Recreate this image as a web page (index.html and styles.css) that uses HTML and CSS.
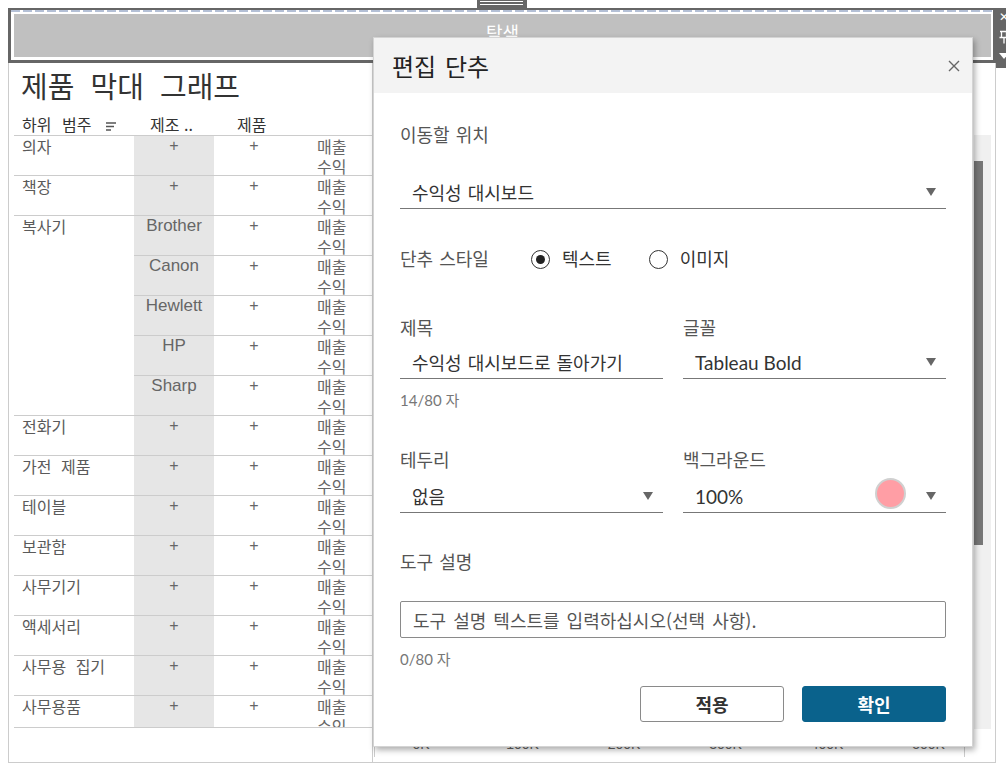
FILE: index.html
```html
<!DOCTYPE html>
<html lang="ko">
<head>
<meta charset="utf-8">
<title>편집 단추</title>
<link rel="stylesheet" href="styles.css">
</head>
<body>
<div class="page">
  <div class="grip"><span></span><span></span></div>
  <div class="frame">
    <div class="frame-inner">
      <div class="nav-btn">탐색</div>
    </div>
  </div>
  <div class="toolbar">
    <span class="tb-x">✕</span>
    <svg class="tb-pin" width="10" height="14" viewBox="0 0 10 14"><path d="M1 1.5H9M2.5 1.5V7M7.5 1.5V7M0.5 7.5H9.5M5 7.5V13.5" fill="none" stroke="#fff" stroke-width="1.3"/></svg>
    <svg class="tb-arrow" width="10" height="7" viewBox="0 0 10 7"><path d="M0 0H10L5 6z" fill="#fff"/></svg>
  </div>

  <div class="sheets">
    <div class="sheet-left">
      <h1 class="title">제품 막대 그래프</h1>
      <div class="thead">
        <div class="h1c">하위 범주<svg class="sort" width="11" height="9" viewBox="0 0 11 9"><path d="M0 1H10M0 4.5H8M0 8H5" stroke="#555" stroke-width="1.6"/></svg></div>
        <div class="h2c">제조 ..</div>
        <div class="h3c">제품</div>
        <div></div>
      </div>
      <div class="tbody">
        <div class="grid">
          <div class="c c1">의자</div><div class="c c2 lat">+</div><div class="c c3 lat">+</div><div class="c c4">매출<br>수익</div>
          <div class="c c1">책장</div><div class="c c2 lat">+</div><div class="c c3 lat">+</div><div class="c c4">매출<br>수익</div>
          <div class="c c1 span5">복사기</div><div class="c c2 lat name">Brother</div><div class="c c3 lat">+</div><div class="c c4">매출<br>수익</div>
          <div class="c c2 lat name">Canon</div><div class="c c3 lat">+</div><div class="c c4">매출<br>수익</div>
          <div class="c c2 lat name">Hewlett</div><div class="c c3 lat">+</div><div class="c c4">매출<br>수익</div>
          <div class="c c2 lat name">HP</div><div class="c c3 lat">+</div><div class="c c4">매출<br>수익</div>
          <div class="c c2 lat name">Sharp</div><div class="c c3 lat">+</div><div class="c c4">매출<br>수익</div>
          <div class="c c1">전화기</div><div class="c c2 lat">+</div><div class="c c3 lat">+</div><div class="c c4">매출<br>수익</div>
          <div class="c c1">가전 제품</div><div class="c c2 lat">+</div><div class="c c3 lat">+</div><div class="c c4">매출<br>수익</div>
          <div class="c c1">테이블</div><div class="c c2 lat">+</div><div class="c c3 lat">+</div><div class="c c4">매출<br>수익</div>
          <div class="c c1">보관함</div><div class="c c2 lat">+</div><div class="c c3 lat">+</div><div class="c c4">매출<br>수익</div>
          <div class="c c1">사무기기</div><div class="c c2 lat">+</div><div class="c c3 lat">+</div><div class="c c4">매출<br>수익</div>
          <div class="c c1">액세서리</div><div class="c c2 lat">+</div><div class="c c3 lat">+</div><div class="c c4">매출<br>수익</div>
          <div class="c c1">사무용 집기</div><div class="c c2 lat">+</div><div class="c c3 lat">+</div><div class="c c4">매출<br>수익</div>
          <div class="c c1">사무용품</div><div class="c c2 lat">+</div><div class="c c3 lat">+</div><div class="c c4">매출<br>수익</div>
        </div>
      </div>
    </div>
    <div class="sheet-right">
      <div class="chart-area">
        <div class="track"><div class="thumb"></div></div>
      </div>
      <div class="axis">
        <span>0K</span><span>100K</span><span>200K</span><span>300K</span><span>400K</span><span>500K</span>
      </div>
    </div>
  </div>

  <div class="dialog">
    <div class="dlg-head">
      <div class="dlg-title">편집 단추</div>
      <svg class="dlg-close" width="12" height="12" viewBox="0 0 12 12"><path d="M1 1L11 11M11 1L1 11" stroke="#666" stroke-width="1.4"/></svg>
    </div>
    <div class="dlg-body">
      <div class="label l-first">이동할 위치</div>
      <div class="field f-first">
        <span class="val">수익성 대시보드</span>
        <svg class="arrow" width="10" height="8" viewBox="0 0 10 8"><path d="M0 0H10L5 8z" fill="#666"/></svg>
      </div>

      <div class="radio-row">
        <div class="label r-label">단추 스타일</div>
        <div class="radio-opt"><span class="radio on"></span><span>텍스트</span></div>
        <div class="radio-opt"><span class="radio"></span><span>이미지</span></div>
      </div>

      <div class="row2 r-title">
        <div class="col">
          <div class="label">제목</div>
          <div class="field f-sub"><span class="val">수익성 대시보드로 돌아가기</span></div>
        </div>
        <div class="col">
          <div class="label">글꼴</div>
          <div class="field f-sub">
            <span class="val lato">Tableau Bold</span>
            <svg class="arrow" width="10" height="8" viewBox="0 0 10 8"><path d="M0 0H10L5 8z" fill="#666"/></svg>
          </div>
        </div>
      </div>
      <div class="hint">14/80 자</div>

      <div class="row2 r-border">
        <div class="col">
          <div class="label">테두리</div>
          <div class="field f-sub">
            <span class="val">없음</span>
            <svg class="arrow" width="10" height="8" viewBox="0 0 10 8"><path d="M0 0H10L5 8z" fill="#666"/></svg>
          </div>
        </div>
        <div class="col">
          <div class="label">백그라운드</div>
          <div class="field f-sub">
            <span class="val lato">100%</span>
            <span class="swatch"></span>
            <svg class="arrow" width="10" height="8" viewBox="0 0 10 8"><path d="M0 0H10L5 8z" fill="#666"/></svg>
          </div>
        </div>
      </div>

      <div class="label l-tip">도구 설명</div>
      <div class="textbox">도구 설명 텍스트를 입력하십시오(선택 사항).</div>
      <div class="hint">0/80 자</div>

      <div class="buttons">
        <button class="btn btn-apply">적용</button>
        <button class="btn btn-ok">확인</button>
      </div>
    </div>
  </div>
</div>
</body>
</html>
```

FILE: styles.css
```css
* { box-sizing: border-box; margin: 0; padding: 0; }
html, body { width: 1006px; height: 766px; overflow: hidden; background: #fff; }
body { font-family: "Noto Sans CJK KR", "Liberation Sans", sans-serif; color: #555; }

.page { position: relative; width: 1006px; height: 766px; padding-top: 8px; }

/* drag grip over the top frame */
.grip { position: absolute; left: 477px; top: 0; width: 50px; height: 8px; background: #666; z-index: 5;
  padding: 1px 4px 0 3px; display: flex; flex-direction: column; gap: 2px; }
.grip span { display: block; height: 1px; background: #fff; }

/* navigation object frame */
.frame { margin-left: 8px; width: 988px; height: 55px; border-style: solid; border-color: #666;
  border-width: 2px 3px 3px 3px; }
.frame-inner { height: 100%; padding: 4px 2px 3px 3px;
  background: repeating-linear-gradient(90deg, #b4c0d6 0 9px, #fff 9px 12px) top left / 100% 2px no-repeat; }
.nav-btn { height: 43px; background: #c0c0c0; color: #fff; font-size: 18px; display: flex;
  align-items: center; justify-content: center; padding-bottom: 8px; }

.toolbar { position: absolute; left: 996px; top: 8px; width: 14px; height: 60px; background: #666; color: #fff;
  display: flex; flex-direction: column; align-items: flex-start; padding: 2px 0 0 3px; z-index: 5; }
.tb-x { font-family: "DejaVu Sans", sans-serif; font-size: 12px; line-height: 14px; }
.tb-pin { margin-top: 6px; }
.tb-arrow { margin-top: 9px; }

/* dashboard sheets */
.sheets { display: flex; margin-left: 8px; width: 988px; height: 700px; border: 1px solid #ccc; border-top: 0; }
.sheet-left { width: 364px; border-right: 1px solid #ccc; padding-left: 5px; display: flex; flex-direction: column; }
.title { margin: 5px 0 11px 7px; font-size: 29px; line-height: 34px; font-weight: 400; color: #333; word-spacing: 8px; }

.thead { display: grid; grid-template-columns: 120px 80px 80px 1fr; height: 23px; border-bottom: 1px solid #ccc;
  font-size: 16px; line-height: 20px; color: #333; align-items: start; padding-top: 1px; }
.h1c { padding-left: 8px; display: flex; align-items: center; word-spacing: 6px; }
.sort { margin-left: 15px; margin-top: 4px; }
.h2c { padding-left: 16px; }
.h3c { padding-left: 23px; }

.tbody { height: 592px; overflow: hidden; border-bottom: 1px solid #ccc; }
.grid { display: grid; grid-template-columns: 120px 80px 80px 1fr; grid-auto-rows: 40px; }
.c { border-bottom: 1px solid #ccc; font-size: 16px; line-height: 20px; color: #5a5a5a; }
.c1 { padding-left: 8px; word-spacing: 5px; }
.span5 { grid-row: span 5; }
.c2 { background: #e6e6e6; text-align: center; color: #666; }
.c3 { text-align: center; color: #666; }
.c4 { padding-left: 23px; color: #666; }
.lat { font-family: "Liberation Sans", sans-serif; }
.name { font-size: 17px; }

.sheet-right { flex: 1; display: flex; flex-direction: column; }
.chart-area { height: 667px; display: flex; justify-content: flex-end; padding: 72px 4px 0 0; }
.track { width: 17px; height: 594px; background: #f0f0f0; padding-top: 26px; }
.thumb { width: 9px; height: 384px; background: #777; }
.axis { margin-left: 1px; width: 591px; height: 27px; border-left: 1px solid #ccc; border-right: 1px solid #ccc;
  display: grid; grid-template-columns: repeat(6, 92px); column-gap: 9.5px; padding-top: 6px;
  font-family: "Liberation Sans", sans-serif; font-size: 14px; line-height: 16px; color: #666; text-align: center; }

/* dialog */
.dialog { position: absolute; left: 373px; top: 37px; width: 600px; height: 710px; background: #fff;
  border: 1px solid #d4d4d4; box-shadow: 2px 3px 6px rgba(0,0,0,0.32); z-index: 10;
  display: flex; flex-direction: column; }
.dlg-head { height: 55px; background: #f3f3f3; display: flex; align-items: center; justify-content: space-between;
  padding: 0 12px 0 18px; }
.dlg-title { font-size: 24px; color: #222; word-spacing: 2px; line-height: 30px; }
.dlg-body { padding: 0 26px; font-size: 18px; }

.label { font-size: 18px; line-height: 24px; color: #555; word-spacing: 1px; }
.l-first { margin-top: 29px; }
.field { height: 34px; border-bottom: 1px solid #777; display: flex; align-items: center; padding: 1px 10px 0 12px;
  color: #333; font-size: 18px; word-spacing: 1px; }
.field .val { flex: 1; white-space: nowrap; }
.f-first { margin-top: 29px; }
.f-sub { margin-top: 6px; }
.lato { font-family: "Lato", sans-serif; font-size: 19px; word-spacing: 0; }
.arrow { flex: none; }

.radio-row { display: flex; align-items: center; margin-top: 37px; height: 24px; color: #333; }
.r-label { width: 131px; }
.radio-opt { display: flex; align-items: center; gap: 12px; margin-right: 37px; line-height: 24px; }
.radio { width: 19px; height: 19px; border-radius: 50%; border: 1px solid #333; display: flex;
  align-items: center; justify-content: center; margin-top: 3px; }
.radio.on { border-width: 1.5px; }
.radio.on::after { content: ""; width: 9px; height: 9px; border-radius: 50%; background: #222; }

.row2 { display: grid; grid-template-columns: 263px 263px; column-gap: 20px; }
.r-title { margin-top: 45px; }
.r-border { margin-top: 38px; }
.r-border .f-sub { margin-top: 8px; }
.hint { margin-top: 12px; font-family: "Lato", "Noto Sans CJK KR", sans-serif; font-size: 15px; line-height: 18px; color: #777; }

.swatch { flex: none; width: 31px; height: 31px; border-radius: 50%; background: #ff9ea5; border: 2px solid #d0d0d0;
  margin: 0 20px 6px 0; }

.l-tip { margin-top: 36px; }
.textbox { margin-top: 28px; height: 37px; border: 1px solid #8a8a8a; border-radius: 2px; padding: 0 12px;
  display: flex; align-items: center; color: #555; font-size: 18px; word-spacing: 2px; }

.buttons { margin-top: 18px; display: flex; justify-content: flex-end; gap: 18px; }
.btn { width: 144px; height: 36px; border-radius: 3px; font-family: "Noto Sans CJK KR", sans-serif; font-size: 18px;
  font-weight: 700; }
.btn-apply { background: #fff; border: 1px solid #8a8a8a; color: #333; }
.btn-ok { background: #0a628c; border: 1px solid #0a628c; color: #fff; }
```
